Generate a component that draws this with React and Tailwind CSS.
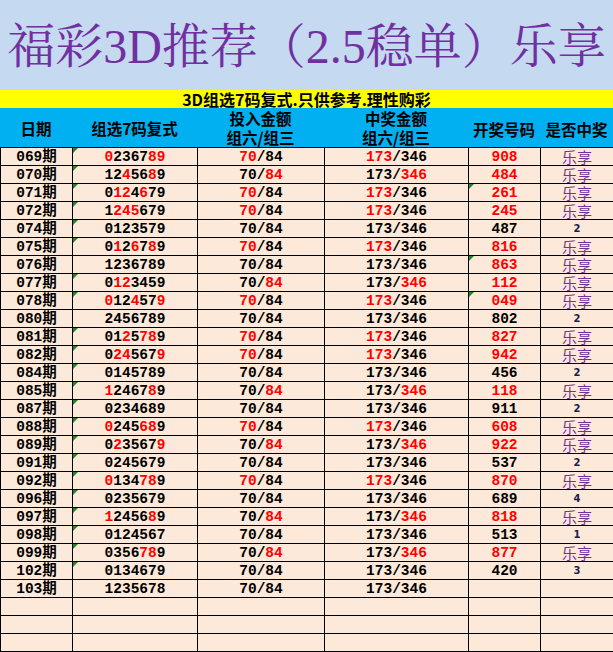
import React from 'react';

// [期号, 组选7码复式, 开奖号码, 未中奖时的数字, 只标开奖号]
const DATA = [
  ['069', '0236789', '908'],
  ['070', '1245689', '484'],
  ['071', '0124679', '261'],
  ['072', '1245679', '245'],
  ['074', '0123579', '487', '2'],
  ['075', '0126789', '816'],
  ['076', '1236789', '863', null, true],
  ['077', '0123459', '112'],
  ['078', '0124579', '049'],
  ['080', '2456789', '802', '2'],
  ['081', '0125789', '827'],
  ['082', '0245679', '942'],
  ['084', '0145789', '456', '2'],
  ['085', '1246789', '118'],
  ['087', '0234689', '911', '2'],
  ['088', '0245689', '608'],
  ['089', '0235679', '922'],
  ['091', '0245679', '537', '2'],
  ['092', '0134789', '870'],
  ['096', '0235679', '689', '4'],
  ['097', '1245689', '818'],
  ['098', '0124567', '513', '1'],
  ['099', '0356789', '877'],
  ['102', '0134679', '420', '3'],
  ['103', '1235678', ''],
];

const MARK_PICK = ['069', '070', '071', '072', '074', '075', '077', '078', '081', '082', '084', '085', '087', '088', '089', '091', '092', '096', '097', '098', '099', '102'];
const MARK_DRAW = ['071', '076', '078'];

const mono = { fontFamily: '"Liberation Mono", "Noto Sans CJK SC", monospace' };

function Mark() {
  return (
    <span className="absolute top-0 left-0 w-0 h-0 border-t-[5px] border-t-[#1e8a1e] border-r-[5px] border-r-transparent" />
  );
}

function Cell({ w, children }) {
  return (
    <div className={`${w} shrink-0 h-full border-l border-black relative flex items-center justify-center`}>
      {children}
    </div>
  );
}

function Row({ item }) {
  const [no, pick, draw, miss, plain] = item || [];
  const win = item && draw && !miss;
  const pair = draw && new Set(draw.split('')).size < 3;
  const hot = win && !plain;
  return (
    <div className="flex h-[18px] border-b border-black bg-[#fde9d9] font-bold text-[14.5px] text-black" style={mono}>
      <Cell w="w-[72px]">{no && <span className="block leading-[15px] pt-[1px]">{no}期</span>}</Cell>
      <Cell w="w-[125px]">
        {item && MARK_PICK.includes(no) && <Mark />}
        {pick && (
          <span className="block leading-[15px] pt-[1px]">
            {pick.split('').map((d, i) => (
              <span key={i} className={hot && draw.includes(d) ? 'text-[#ff0000]' : ''}>{d}</span>
            ))}
          </span>
        )}
      </Cell>
      <Cell w="w-[127px]">
        {item && (
          <span className="block leading-[15px] pt-[1px]">
            <span className={hot && !pair ? 'text-[#ff0000]' : ''}>70</span>/
            <span className={hot && pair ? 'text-[#ff0000]' : ''}>84</span>
          </span>
        )}
      </Cell>
      <Cell w="w-[144px]">
        {item && (
          <span className="block leading-[15px] pt-[1px]">
            <span className={hot && !pair ? 'text-[#ff0000]' : ''}>173</span>/
            <span className={hot && pair ? 'text-[#ff0000]' : ''}>346</span>
          </span>
        )}
      </Cell>
      <Cell w="w-[72px]">
        {item && MARK_DRAW.includes(no) && <Mark />}
        {draw && <span className={`block leading-[15px] pt-[1px] ${win ? 'text-[#ff0000]' : ''}`}>{draw}</span>}
      </Cell>
      <Cell w="w-[73px]">
        {win && (
          <span className="block text-[15px] leading-[15px] font-normal text-[#7030a0]" style={{ fontFamily: '"Noto Sans CJK SC", sans-serif' }}>
            乐享
          </span>
        )}
        {miss && <span className="block text-[10px] leading-[12px] font-bold text-[#1c1c4a]" style={{ fontFamily: '"DejaVu Sans", sans-serif' }}>{miss}</span>}
      </Cell>
    </div>
  );
}

export default function App() {
  const rows = [...DATA, null, null, null];
  return (
    <div className="w-[613px] h-[652px] overflow-hidden bg-[#fde9d9]" style={{ fontFamily: '"Noto Sans CJK SC", sans-serif' }}>
      {/* 标题 */}
      <div className="h-[90px] bg-[#c5d9f1] flex items-center justify-center pt-[4px]">
        <h1
          className="text-[48px] leading-[50px] text-[#7030a0] whitespace-nowrap"
          style={{ fontFamily: '"Liberation Serif", "Noto Serif CJK SC", "Noto Sans CJK SC", serif' }}
        >
          福彩3D推荐（2.5稳单）乐享
        </h1>
      </div>

      <div className="h-[18px] bg-[#ffff00] flex items-center justify-center">
        <span className="block text-[16px] leading-[17px] font-bold text-black">3D组选7码复式.只供参考.理性购彩</span>
      </div>

      {/* 表头 */}
      <div className="h-[40px] bg-[#00b0f0] border-b border-black flex text-[15.5px] font-bold text-black">
        <div className="w-[72px] flex items-center justify-center">
          <span className="block leading-[18px]">日期</span>
        </div>
        <div className="w-[125px] flex items-center justify-center">
          <span className="block leading-[18px]">组选7码复式</span>
        </div>
        <div className="w-[127px] flex flex-col items-center justify-center gap-[1px]">
          <span className="block leading-[18px]">投入金额</span>
          <span className="block leading-[18px]">组六/组三</span>
        </div>
        <div className="w-[144px] flex flex-col items-center justify-center gap-[1px]">
          <span className="block leading-[18px]">中奖金额</span>
          <span className="block leading-[18px]">组六/组三</span>
        </div>
        <div className="w-[72px] flex items-center justify-center pt-[2px]">
          <span className="block leading-[18px]">开奖号码</span>
        </div>
        <div className="w-[73px] flex items-center justify-center pt-[2px]">
          <span className="block leading-[18px]">是否中奖</span>
        </div>
      </div>

      {rows.map((item, i) => (
        <Row key={i} item={item} />
      ))}
    </div>
  );
}
